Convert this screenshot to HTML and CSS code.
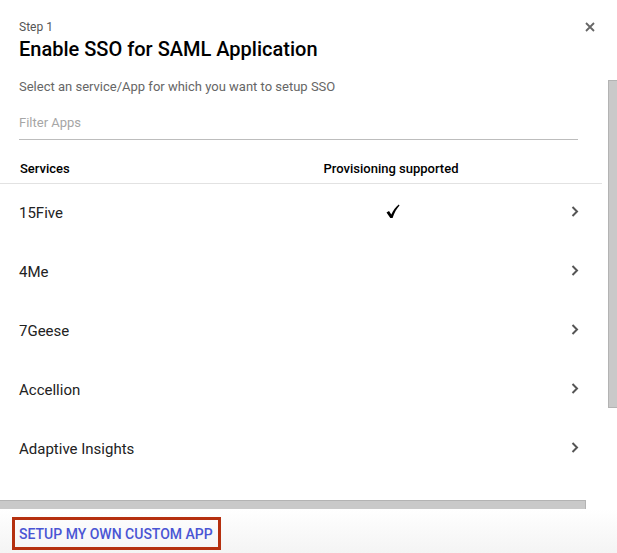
FILE: index.html
```html
<!DOCTYPE html>
<html>
<head>
<meta charset="utf-8">
<link rel="stylesheet" href="styles.css">
</head>
<body>
<div class="dialog">
  <div class="main">
    <div class="content">
      <div class="head">
        <div class="step">Step 1</div>
        <h1 class="title">Enable SSO for SAML Application</h1>
        <button class="close" aria-label="Close">
          <svg width="10" height="10" viewBox="0 0 10 10"><path d="M1 1L9 9M9 1L1 9" stroke="#666" stroke-width="1.8"/></svg>
        </button>
      </div>
      <p class="desc">Select an service/App for which you want to setup SSO</p>
      <div class="filter">Filter Apps</div>
      <div class="thead">
        <span class="c-name">Services</span>
        <span class="c-prov">Provisioning supported</span>
        <span class="c-go"></span>
      </div>
      <div class="rows">
        <div class="row">
          <span class="c-name">15Five</span>
          <span class="c-prov"><svg width="14" height="15" viewBox="0 0 14 15"><path d="M0.5 8.5L3 7L5.3 10.5C7.2 6.5 9.8 3 12.8 0.6L13.5 1.4C10.8 4.3 8.3 8.3 6.6 14L4.3 14Z" fill="#000"/></svg></span>
          <span class="c-go"><svg width="8" height="11" viewBox="0 0 8 11"><path d="M1.5 1L6 5.5L1.5 10" fill="none" stroke="#555" stroke-width="2"/></svg></span>
        </div>
        <div class="row">
          <span class="c-name">4Me</span>
          <span class="c-prov"></span>
          <span class="c-go"><svg width="8" height="11" viewBox="0 0 8 11"><path d="M1.5 1L6 5.5L1.5 10" fill="none" stroke="#555" stroke-width="2"/></svg></span>
        </div>
        <div class="row">
          <span class="c-name">7Geese</span>
          <span class="c-prov"></span>
          <span class="c-go"><svg width="8" height="11" viewBox="0 0 8 11"><path d="M1.5 1L6 5.5L1.5 10" fill="none" stroke="#555" stroke-width="2"/></svg></span>
        </div>
        <div class="row">
          <span class="c-name">Accellion</span>
          <span class="c-prov"></span>
          <span class="c-go"><svg width="8" height="11" viewBox="0 0 8 11"><path d="M1.5 1L6 5.5L1.5 10" fill="none" stroke="#555" stroke-width="2"/></svg></span>
        </div>
        <div class="row">
          <span class="c-name">Adaptive Insights</span>
          <span class="c-prov"></span>
          <span class="c-go"><svg width="8" height="11" viewBox="0 0 8 11"><path d="M1.5 1L6 5.5L1.5 10" fill="none" stroke="#555" stroke-width="2"/></svg></span>
        </div>
      </div>
    </div>
    <div class="vtrack"><div class="vthumb"></div></div>
  </div>
  <div class="hbar"></div>
  <div class="footer">
    <button class="custom">SETUP MY OWN CUSTOM APP</button>
  </div>
</div>
</body>
</html>
```
FILE: styles.css
```css
html, body {
  margin: 0;
  padding: 0;
  background: #fff;
}
body {
  font-family: Roboto, "Liberation Sans", Arial, sans-serif;
  color: #212121;
}
.dialog {
  width: 617px;
  height: 553px;
  display: flex;
  flex-direction: column;
  overflow: hidden;
}
.main {
  height: 500px;
  display: flex;
}
.content {
  width: 602px;
  position: relative;
}
.head {
  padding: 20px 19px 0 19px;
  position: relative;
}
.step {
  font-size: 12px;
  line-height: 14px;
  color: #555;
}
.title {
  margin: 3px 0 0;
  font-size: 20px;
  font-weight: 500;
  line-height: 24px;
  color: #000;
}
.close {
  position: absolute;
  top: 22px;
  right: 7px;
  border: 0;
  background: none;
  padding: 0;
  width: 10px;
  height: 10px;
  display: flex;
}
.desc {
  margin: 18px 19px 0;
  font-size: 13px;
  line-height: 16px;
  color: #666;
}
.filter {
  margin: 20px 24px 0 19px;
  font-size: 13px;
  line-height: 16px;
  color: #a6a6a6;
  padding-bottom: 8px;
  border-bottom: 1px solid #bdbdbd;
}
.thead {
  display: flex;
  align-items: center;
  height: 44px;
  padding-top: 14px;
  border-bottom: 1px solid #e2e2e2;
  font-size: 13px;
  font-weight: 500;
  color: #000;
  box-sizing: border-box;
}
.thead, .row {
  padding-left: 20px;
}
.c-name {
  width: 270px;
  flex: none;
}
.c-prov {
  width: 202px;
  flex: none;
  text-align: center;
  display: flex;
  justify-content: center;
}
.c-go {
  flex: 1;
  display: flex;
  justify-content: flex-end;
  padding-right: 23px;
}
.row {
  display: flex;
  align-items: center;
  height: 59px;
  box-sizing: border-box;
  padding-bottom: 1px;
  font-size: 15px;
  color: #222;
}
.row .c-name {
  margin-left: -1px;
}
.row .c-prov svg {
  margin-left: 6px;
  margin-top: -3px;
}
.row .c-go svg {
  margin-top: -4px;
}
.vtrack {
  flex: 1;
  display: flex;
  justify-content: flex-end;
  padding-top: 80px;
}
.vthumb {
  width: 8px;
  height: 326px;
  background: #c9c9c9;
  border: 1px solid #b3b3b3;
  border-right: 0;
}
.hbar {
  width: 585px;
  height: 8px;
  background: #c9c9c9;
  border-top: 1px solid #b3b3b3;
  border-right: 1px solid #b3b3b3;
  flex: none;
}
.footer {
  flex: 1;
  background: linear-gradient(#ffffff, #f4f4f4);
  padding: 8px 0 0 12px;
}
.custom {
  border: 3px solid #b5300f;
  background: none;
  height: 33px;
  width: 209px;
  padding: 0 0 0 4px;
  text-align: left;
  font-family: Roboto, "Liberation Sans", Arial, sans-serif;
  font-size: 14px;
  font-weight: 500;
  color: #4a55d4;
}
```
